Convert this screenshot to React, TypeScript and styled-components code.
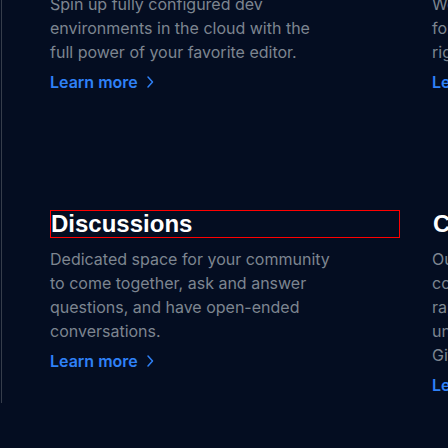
import React from "react";
import styled, { createGlobalStyle } from "styled-components";

const GlobalStyle = createGlobalStyle`
  html, body { margin: 0; padding: 0; background: #040d21; overflow: hidden; }
  body { font-family: Inter, "Noto Sans", sans-serif; }
`;

const Frame = styled.div`
  margin-left: 1px;
  border-left: 1px solid #363d4b;
  min-height: 448px;
  padding-left: 48px;
  box-sizing: border-box;
`;

const Grid = styled.div`
  display: grid;
  grid-template-columns: 350px 350px;
  column-gap: 32px;
  row-gap: 116px;
  margin-top: -45px;
`;

const Card = styled.div`
  display: flex;
  flex-direction: column;
  align-items: flex-start;
`;

const Heading = styled.h3<{ $outlined?: boolean }>`
  margin: 0;
  align-self: stretch;
  font-family: "Liberation Sans", Arial, sans-serif;
  font-weight: 700;
  font-size: 24px;
  line-height: 26px;
  color: #ffffff;
  white-space: nowrap;
  border: 1px solid ${(p) => (p.$outlined ? "#ff0000" : "transparent")};
`;

const Text = styled.p`
  margin: 9px 0 0;
  max-width: 286px;
  font-size: 16px;
  line-height: 24px;
  color: #7d8590;
`;

const Link = styled.a`
  margin-top: 6px;
  display: inline-flex;
  align-items: center;
  gap: 8px;
  font-size: 16px;
  line-height: 24px;
  font-weight: 600;
  color: #2f81f7;
  text-decoration: none;
`;

const Chevron = () => (
  <svg width="8" height="14" viewBox="0 0 8 14" fill="none">
    <path d="M2 2 L6.5 7 L2 12" stroke="#2f81f7" strokeWidth="1.5" strokeLinecap="round" strokeLinejoin="round" />
  </svg>
);

const cards = [
  {
    title: "Codespaces",
    lines: ["Spin up fully configured dev", "environments in the cloud with the", "full power of your favorite editor."],
  },
  {
    title: "GitHub Copilot",
    lines: ["Work faster with AI-powered code", "for any language and framework,", "right inside your favorite editor."],
  },
  {
    title: "Discussions",
    lines: [
      "Dedicated space for your community",
      "to come together, ask and answer",
      "questions, and have open-ended",
      "conversations.",
    ],
    outlined: true,
  },
  {
    title: "Code search & code view",
    lines: [
      "Our new code search tools help",
      "code authors and reviewers to",
      "rapidly search, navigate, and",
      "understand code, right from",
      "GitHub.com.",
    ],
  },
];

export default function App() {
  return (
    <>
      <GlobalStyle />
      <Frame>
        <Grid>
          {cards.map((c) => (
            <Card key={c.title}>
              <Heading $outlined={c.outlined}>{c.title}</Heading>
              <Text>
                {c.lines.map((l, i) => (
                  <React.Fragment key={i}>
                    {i > 0 && <br />}
                    {l}
                  </React.Fragment>
                ))}
              </Text>
              <Link href="#">
                Learn more
                <Chevron />
              </Link>
            </Card>
          ))}
        </Grid>
      </Frame>
    </>
  );
}
